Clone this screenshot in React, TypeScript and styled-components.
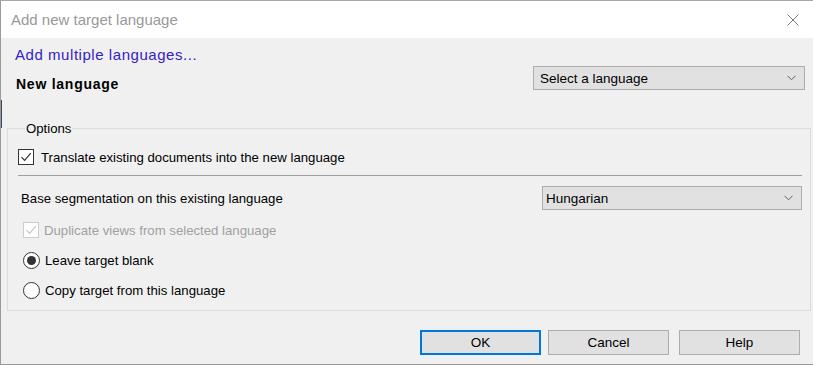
import React, { useState } from "react";
import styled, { createGlobalStyle } from "styled-components";

const GlobalStyle = createGlobalStyle`
  html, body {
    margin: 0;
    padding: 0;
    background: #f0f0f0;
  }
  body {
    font-family: "Liberation Sans", Arial, sans-serif;
    font-size: 13.2px;
    color: #000;
  }
`;

const Chevron = () => (
  <svg width="9" height="6" viewBox="0 0 9 6">
    <path d="M0.5 0.8 L4.5 4.8 L8.5 0.8" fill="none" stroke="#606060" strokeWidth="1" />
  </svg>
);

const CloseIcon = () => (
  <svg width="12" height="12" viewBox="0 0 12 12">
    <path d="M0.5 0.5 L11.5 11.5 M11.5 0.5 L0.5 11.5" stroke="#7a7a7a" strokeWidth="1" />
  </svg>
);

const CheckMark = ({ color }: { color: string }) => (
  <svg width="12" height="12" viewBox="0 0 12 12">
    <path d="M1.5 6.2 L4.6 9.3 L10.8 2.2" fill="none" stroke={color} strokeWidth="1.2" />
  </svg>
);

export default function App() {
  const [translate, setTranslate] = useState(true);
  const [target, setTarget] = useState<"blank" | "copy">("blank");

  return (
    <Window>
      <GlobalStyle />
      <TitleBar>
        <Title>Add new target language</Title>
        <CloseBtn aria-label="Close">
          <CloseIcon />
        </CloseBtn>
      </TitleBar>

      <Body>
        <Top>
          <Link href="#">Add multiple languages...</Link>
          <NewLangRow>
            <BoldLabel>New language</BoldLabel>
            <Combo $width={272} $inset={6}>
              <span>Select a language</span>
              <Chevron />
            </Combo>
          </NewLangRow>
        </Top>

        <Group>
          <Legend>Options</Legend>
          <CheckRow onClick={() => setTranslate(!translate)}>
            <CheckBox>{translate && <CheckMark color="#333" />}</CheckBox>
            <span>Translate existing documents into the new language</span>
          </CheckRow>
          <Separator />
          <SegRow>
            <SegLabel>Base segmentation on this existing language</SegLabel>
            <Combo $width={260} $inset={3}>
              <span>Hungarian</span>
              <Chevron />
            </Combo>
          </SegRow>
          <OptionRow $disabled>
            <CheckBox $disabled>
              <CheckMark color="#c4c4c4" />
            </CheckBox>
            <span>Duplicate views from selected language</span>
          </OptionRow>
          <OptionRow onClick={() => setTarget("blank")}>
            <Radio $checked={target === "blank"} />
            <span>Leave target blank</span>
          </OptionRow>
          <OptionRow onClick={() => setTarget("copy")}>
            <Radio $checked={target === "copy"} />
            <span>Copy target from this language</span>
          </OptionRow>
        </Group>

        <Footer>
          <Button $default>OK</Button>
          <Button>Cancel</Button>
          <Button $wide>Help</Button>
        </Footer>
      </Body>
    </Window>
  );
}

// ─── Styles ───────────────────────────────────────────────────────────────────

const Window = styled.div`
  position: relative;
  width: 813px;
  height: 365px;
  box-sizing: border-box;
  border-top: 1px solid #a8a8a8;
  border-left: 1px solid #9a9a9a;
  border-bottom: 1px solid #9a9a9a;
  background: #f0f0f0;
  display: flex;
  flex-direction: column;
  overflow: hidden;
  &::before {
    content: "";
    position: absolute;
    left: -1px;
    top: 99px;
    width: 2px;
    height: 28px;
    background: #3c4a5a;
  }
`;
const TitleBar = styled.div`
  height: 37px;
  background: #fff;
  display: flex;
  align-items: center;
  justify-content: space-between;
  padding: 0 14px 0 10px;
  flex-shrink: 0;
`;
const Title = styled.div`
  font-size: 15px;
  color: #999;
  padding-bottom: 1px;
`;
const CloseBtn = styled.button`
  background: none;
  border: none;
  padding: 0;
  display: flex;
  cursor: pointer;
`;
const Body = styled.div`
  flex: 1;
  display: flex;
  flex-direction: column;
  padding: 0 2px 0 6px;
`;
const Top = styled.div`
  display: flex;
  flex-direction: column;
  padding: 8px 6px 0 8px;
`;
const Link = styled.a`
  font-size: 15px;
  letter-spacing: 0.55px;
  line-height: 18px;
  color: #3422c9;
  text-decoration: none;
  align-self: flex-start;
`;
const NewLangRow = styled.div`
  display: flex;
  justify-content: space-between;
  align-items: flex-start;
  margin-top: 2px;
`;
const BoldLabel = styled.div`
  font-weight: 700;
  font-size: 14px;
  letter-spacing: 0.75px;
  line-height: 16px;
  padding: 10px 0 0 1px;
`;
const Combo = styled.div<{ $width: number; $inset: number }>`
  width: ${(p) => p.$width}px;
  height: 24px;
  box-sizing: border-box;
  background: #e1e1e1;
  border: 1px solid #adadad;
  display: flex;
  align-items: center;
  justify-content: space-between;
  padding: 0 8px 0 ${(p) => p.$inset}px;
  font-size: 13.5px;
`;
const Group = styled.fieldset`
  margin: 29px 0 0 0;
  padding: 11px 8px 0 10px;
  border: 1px solid #dcdcdc;
  height: 190px;
  box-sizing: border-box;
  display: flex;
  flex-direction: column;
`;
const Legend = styled.legend`
  padding: 0 1px;
  margin-left: 7px;
  font-size: 13.2px;
  line-height: 15px;
`;
const CheckRow = styled.label`
  display: flex;
  align-items: center;
  gap: 7px;
  height: 20px;
  cursor: pointer;
`;
const CheckBox = styled.span<{ $disabled?: boolean }>`
  width: 16px;
  height: 16px;
  box-sizing: border-box;
  border: 1px solid ${(p) => (p.$disabled ? "#cccccc" : "#333")};
  background: #fff;
  display: flex;
  align-items: center;
  justify-content: center;
`;
const Separator = styled.div`
  height: 1px;
  background: #a0a0a0;
  margin: 8px 0 0 0;
`;
const SegRow = styled.div`
  display: flex;
  align-items: center;
  justify-content: space-between;
  height: 24px;
  margin-top: 10px;
`;
const SegLabel = styled.span`
  padding-left: 3px;
`;
const OptionRow = styled.label<{ $disabled?: boolean }>`
  display: flex;
  align-items: center;
  gap: 5px;
  height: 20px;
  margin-top: 10px;
  padding-left: 5px;
  color: ${(p) => (p.$disabled ? "#a0a0a0" : "#000")};
  cursor: ${(p) => (p.$disabled ? "default" : "pointer")};
`;
const Radio = styled.span<{ $checked?: boolean }>`
  width: 17px;
  height: 17px;
  box-sizing: border-box;
  border-radius: 50%;
  border: 1px solid #333;
  background: #fff;
  display: flex;
  align-items: center;
  justify-content: center;
  &::after {
    content: "";
    display: ${(p) => (p.$checked ? "block" : "none")};
    width: 9px;
    height: 9px;
    border-radius: 50%;
    background: #333;
  }
`;
const Footer = styled.div`
  display: flex;
  justify-content: flex-end;
  gap: 7px;
  padding: 19px 11px 0 0;
`;
const Button = styled.button<{ $default?: boolean; $wide?: boolean }>`
  width: 121px;
  height: 25px;
  box-sizing: border-box;
  margin-left: ${(p) => (p.$wide ? 3 : 0)}px;
  background: #e1e1e1;
  border: ${(p) => (p.$default ? "2px solid #0078d7" : "1px solid #adadad")};
  font-family: "Liberation Sans", Arial, sans-serif;
  font-size: 13.5px;
  color: #000;
  padding: 0;
  cursor: pointer;
`;
